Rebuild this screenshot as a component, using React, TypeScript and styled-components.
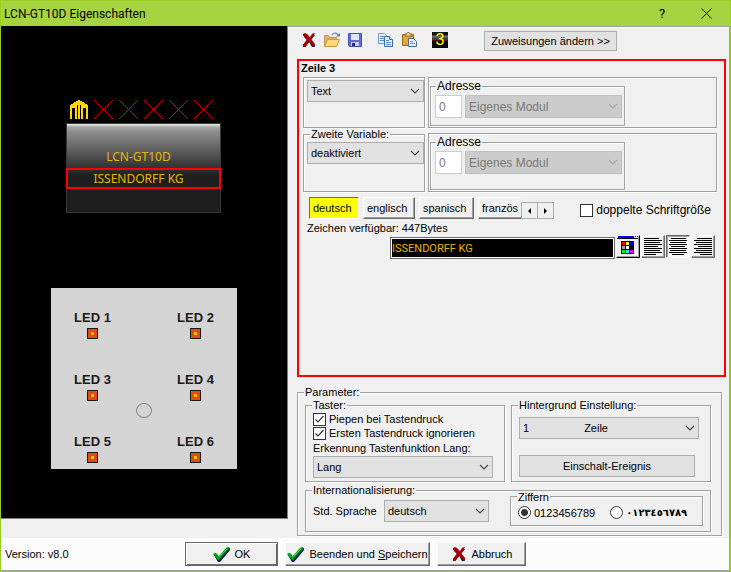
import React from "react";
import styled, { createGlobalStyle, css } from "styled-components";

const GlobalStyle = createGlobalStyle`
  * { box-sizing: border-box; }
  body {
    margin: 0;
    font: 11px/14px "Liberation Sans", Arial, sans-serif;
    color: #000;
    background: #f0f0f0;
  }
  button, input, select { font: inherit; color: inherit; margin: 0; }
`;

const etched = css`
  border: 1px solid #a0a0a0;
  box-shadow: 1px 1px 0 #fff, inset 1px 1px 0 #fff;
`;

const raised = css`
  border: 1px solid;
  border-color: #fff #696969 #696969 #fff;
  box-shadow: inset -1px -1px 0 #a0a0a0;
`;

const Window = styled.div`
  display: flex;
  flex-direction: column;
  min-height: 100vh;
  border: 1px solid #9acd20;
  background: #f0f0f0;
`;

const TitleBar = styled.header`
  display: flex;
  align-items: center;
  height: 25px;
  padding: 0 12px 0 3px;
  background: #a6d340;
  font: 12px/16px Roboto, "Open Sans", sans-serif;
`;

const Title = styled.h1`
  flex: 1;
  margin: 0;
  font: inherit;
`;

const TitleButton = styled.button`
  display: grid;
  place-items: center;
  width: 24px;
  height: 22px;
  padding: 0;
  border: 0;
  background: none;
  font-size: 13px;

  & + & { margin-left: 20px; }
`;

const Body = styled.main`
  display: flex;
  flex: 1;
`;

const Preview = styled.section`
  display: flex;
  flex-direction: column;
  flex: 0 0 287px;
  margin-bottom: 19px;
  background: #000;
  border: solid #808080;
  border-width: 0 1px 1px 0;
`;

const Display = styled.div`
  width: 155px;
  margin: 74px 0 0 65px;
`;

const SymbolRow = styled.div`
  display: flex;
  gap: 6px;
  height: 23px;
  padding-left: 4px;
`;

const Lcd = styled.div`
  height: 90px;
  border: 1px solid #383838;
  background: linear-gradient(#f0f0f0 0, #a8a8a8 3px, #8c8c8c 8px, #1e1e1e 52px, #1e1e1e);
`;

const LcdLine = styled.div<{ $selected?: boolean }>`
  display: flex;
  align-items: ${(p) => (p.$selected ? "center" : "flex-end")};
  justify-content: center;
  height: ${(p) => (p.$selected ? 21 : 44)}px;
  margin: 0 -1px;
  padding: 0 10px ${(p) => (p.$selected ? 0 : 3)}px 0;
  border: ${(p) => (p.$selected ? "2px solid #f00" : "0")};
  color: #e6b800;
  font: 12px/16px "Noto Sans", "Open Sans", sans-serif;
`;

const LedPanel = styled.div`
  position: relative;
  display: grid;
  grid-template-columns: 1fr 1fr;
  grid-auto-rows: 62px;
  width: 186px;
  height: 181px;
  margin: 75px 0 0 50px;
  padding: 22px 0 0;
  background: #d4d4d4;
`;

const Led = styled.div`
  display: flex;
  flex-direction: column;
  align-items: center;
  padding-right: 10px;
  font: bold 13px/16px "Liberation Sans", Arial, sans-serif;
  color: #1c1817;

  &:nth-child(even) { padding: 0 0 0 10px; }
`;

const Lamp = styled.span`
  display: grid;
  place-items: center;
  width: 11px;
  height: 11px;
  margin-top: 2px;
  border: 1px solid #1c1817;
  background: #e14a17;

  &::after { content: ""; width: 3px; height: 3px; background: #ffc400; }
`;

const Sensor = styled.span`
  position: absolute;
  left: 85px;
  top: 115px;
  width: 16px;
  height: 15px;
  border: 1px solid #888;
  border-radius: 50%;
`;

const Settings = styled.section`
  flex: 1;
  min-width: 0;
  padding: 0 3px 2px 9px;
  border: solid #a0a0a0;
  border-width: 1px 1px 0 0;
  box-shadow: inset 0 1px 0 #fff;
`;

const Toolbar = styled.div`
  display: flex;
  align-items: center;
  gap: 7px;
  height: 28px;
  padding-left: 4px;
`;

const ToolButton = styled.button<{ $gap?: number }>`
  display: grid;
  place-items: center;
  width: 16px;
  height: 16px;
  margin-right: ${(p) => p.$gap ?? 0}px;
  margin-bottom: 3px;
  padding: 0;
  border: 0;
  background: none;
`;

const DigitTool = styled(ToolButton)`
  background: linear-gradient(#111 0 3px, #777 4px, #333 7px, #a22 8px, #000 9px);
  color: #ff0;
  font: 16px/16px "Liberation Sans", Arial, sans-serif;
`;

const FlatButton = styled.button`
  border: 1px solid #adadad;
  background: #e1e1e1;
  text-align: center;
  padding: 0;
`;

const AssignButton = styled(FlatButton)`
  width: 133px;
  height: 20px;
`;

const LinePanel = styled.section`
  height: 318px;
  margin-top: 4px;
  padding: 0 7px 0 4px;
  border: 2px solid #f00;
`;

const LineTitle = styled.h2`
  margin: 0 -2px;
  height: 16px;
  font: bold 11px/14px "Liberation Sans", Arial, sans-serif;
`;

const VariableRow = styled.div`
  display: flex;
  gap: 3px;
`;

const Frame = styled.fieldset`
  min-width: 0;
  margin: 0;
  padding: 0 7px;
  ${etched}
`;

const Legend = styled.legend`
  padding: 0 1px;
  margin-left: -1px;
  background: #f0f0f0;
  line-height: 12px;
`;

const VariableLegend = styled(Legend)`
  margin-left: 3px;
`;

const BigLegend = styled(Legend)`
  margin-left: 1px;
  font-size: 12px;
  line-height: 14px;
`;

const VariableFrame = styled(Frame)`
  flex: 0 0 122px;
  padding: 2px 0 0 3px;
`;

const AddressBox = styled.div<{ $offset?: number; $height: number }>`
  display: flex;
  flex: 1;
  height: ${(p) => p.$height}px;
  margin-top: ${(p) => p.$offset ?? 0}px;
  padding: 1px;
  ${etched}
`;

const AddressFrame = styled(Frame)`
  width: 195px;
  padding: 2px 2px 0 4px;
`;

const AddressFields = styled.div`
  display: flex;
  gap: 3px;
  font-size: 12px;
  color: #787878;
`;

const NumberInput = styled.input`
  width: 27px;
  height: 23px;
  padding: 0 3px;
  border: 1px solid #ccc;
  background: #fff;
`;

const SelectShell = styled.span<{ $width?: number; $height?: number }>`
  position: relative;
  display: block;
  width: ${(p) => (p.$width ? `${p.$width}px` : "100%")};
  height: ${(p) => p.$height ?? 22}px;

  svg { position: absolute; right: 4px; top: 7px; pointer-events: none; }
`;

const SelectBox = styled.select`
  appearance: none;
  width: 100%;
  height: 100%;
  padding: 0 18px 0 3px;
  border: 1px solid #adadad;
  border-radius: 0;
  background: #e1e1e1;

  &:disabled { opacity: 1; color: #787878; background: #ccc; border-color: #bfbfbf; }
`;

const TabRow = styled.div`
  display: flex;
  align-items: flex-end;
  height: 27px;
  padding-left: 6px;
`;

const Tabs = styled.div`
  display: flex;
  flex: 0 0 212px;
  gap: 4px;
  overflow: hidden;
`;

const Tab = styled.button<{ $active?: boolean; $width: number }>`
  flex: 0 0 ${(p) => p.$width}px;
  height: 22px;
  padding: 0 0 0 3px;
  text-align: left;
  background: #f0f0f0;
  ${raised}
  ${(p) => p.$active && css`
    background: #ff0;
    border-color: #696969 #fff #fff #696969;
    box-shadow: none;
  `}
`;

const ScrollButton = styled.button`
  display: grid;
  place-items: center;
  width: 17px;
  height: 17px;
  padding: 0;
  border: 1px solid #adadad;
  background: #f0f0f0;

  & + & { margin-left: -1px; }
`;

const Choice = styled.label<{ $large?: boolean }>`
  display: flex;
  align-items: center;
  gap: 3px;
  font-size: ${(p) => (p.$large ? 12 : 11)}px;
  white-space: nowrap;
`;

const DoubleSize = styled.div`
  margin: 0 6px 2px auto;
`;

const CheckInput = styled.input`
  appearance: none;
  flex: none;
  width: 13px;
  height: 13px;
  border: 1px solid #333;
  background: #fff;

  &:checked {
    background: #fff url("data:image/svg+xml,%3Csvg xmlns='http://www.w3.org/2000/svg' width='11' height='11'%3E%3Cpath d='M1.5 5.5 4 8l5.500-6' fill='none' stroke='%23333' stroke-width='1.200'/%3E%3C/svg%3E") center no-repeat;
  }
`;

const RadioInput = styled.input`
  appearance: none;
  flex: none;
  width: 13px;
  height: 13px;
  border: 1px solid #333;
  border-radius: 50%;
  background: #fff;

  &:checked { background: radial-gradient(circle, #333 0 3px, #fff 4px); }
`;

const Capacity = styled.div`
  height: 16px;
  padding: 2px 0 0 4px;
`;

const EditorRow = styled.div`
  display: flex;
  gap: 1px;
  margin: 0 2px 0 87px;
`;

const LineInput = styled.input`
  flex: 1;
  min-width: 0;
  height: 22px;
  margin-top: 2px;
  padding: 0 1px;
  border: 1px solid #696969;
  background: #000;
  color: #e6b800;
  font-family: Roboto, "Liberation Sans", sans-serif;
  box-shadow: inset 0 0 0 1px #fff;
`;

const SquareButton = styled.button<{ $pressed?: boolean }>`
  display: grid;
  place-items: center;
  width: 24px;
  height: 23px;
  padding: 0;
  background: #f0f0f0;
  ${raised}
  ${(p) => p.$pressed && css`
    background: #fafafa;
    border-color: #696969 #fff #fff #696969;
    box-shadow: inset 1px 1px 0 #a0a0a0;
  `}
`;

const PaletteButton = styled(SquareButton)`
  border-color: #fff #000 #000 #fff;
`;

const ParameterFrame = styled(Frame)`
  margin: 9px 4px 0 0;
  padding: 1px 10px 3px 7px;
`;

const ParameterGrid = styled.div`
  display: grid;
  grid-template-columns: 1fr 1fr;
  gap: 2px 6px;
`;

const KeyFrame = styled(Frame)`
  padding: 1px 11px 3px 7px;
`;

const KeyLabel = styled.label`
  display: block;
  line-height: 16px;
`;

const BackgroundFrame = styled(Frame)`
  display: flex;
  flex-direction: column;
  gap: 16px;
  padding: 6px 11px 0 7px;
`;

const EventButton = styled(FlatButton)`
  height: 22px;
  margin-right: 4px;
`;

const LanguageFrame = styled(Frame)`
  grid-column: 1 / -1;
`;

const LanguageRow = styled.div`
  display: flex;
  align-items: center;
  gap: 6px;
  height: 35px;
  padding-bottom: 5px;
`;

const LanguageLabel = styled.label`
  flex: 0 0 65px;
`;

const DigitFrame = styled(Frame)`
  width: 193px;
  height: 35px;
  margin: -6px 0 0 auto;
`;

const DigitOptions = styled.div`
  display: flex;
  gap: 15px;
  padding-top: 3px;
`;

const ArabicDigits = styled.span`
  font: bold 10px/13px "DejaVu Sans", sans-serif;
`;

const Footer = styled.footer`
  display: flex;
  align-items: center;
  gap: 7px;
  height: 33px;
  padding: 0 4px 1px;
  background: #fcfcfc;
  border: solid #a0a0a0;
  border-width: 0 1px 1px 0;
`;

const Version = styled.span`
  flex: 0 0 173px;
`;

const DialogButton = styled.button<{ $width: number; $default?: boolean }>`
  display: flex;
  align-items: center;
  justify-content: center;
  gap: 5px;
  width: ${(p) => p.$width}px;
  height: 24px;
  padding: 0;
  background: #f0f0f0;
  white-space: nowrap;
  ${raised}
  ${(p) => p.$default && css`
    border-color: #696969;
    box-shadow: inset 1px 1px 0 #fff, inset -1px -1px 0 #696969;
  `}
`;

const Chevron = ({ muted }: { muted?: boolean }) => (
  <svg width="10" height="8" viewBox="0 0 10 8" aria-hidden="true">
    <path d="M1 2l4 4 4-4" fill="none" stroke={muted ? "#a0a0a0" : "#444"} strokeWidth="1.1" />
  </svg>
);

type SelectProps = {
  id?: string;
  label?: string;
  options: string[];
  width?: number;
  height?: number;
  disabled?: boolean;
};

const Select = ({ id, label, options, width, height, disabled }: SelectProps) => (
  <SelectShell $width={width} $height={height}>
    <SelectBox id={id} aria-label={label} disabled={disabled}>
      {options.map((o) => <option key={o}>{o}</option>)}
    </SelectBox>
    <Chevron muted={disabled} />
  </SelectShell>
);

const Address = () => (
  <AddressFrame disabled>
    <BigLegend>Adresse</BigLegend>
    <AddressFields>
      <NumberInput aria-label="Adresse" defaultValue="0" disabled />
      <Select label="Modul" options={["Eigenes Modul"]} width={157} height={23} disabled />
    </AddressFields>
  </AddressFrame>
);

const DeleteIcon = () => (
  <svg width="16" height="16" viewBox="0 0 16 16" aria-hidden="true">
    <path d="M3 3l2-1 2 1 2 3 3-4 2 1-4 5 3 4 1 3-3 0-3-5-4 5-2 0 0-2 4-5-3-3z" fill="#111c4a" />
    <path d="M2 2l2-1 2 1 2.500 3.500 3-4L14 1l-4 6 4 5v2h-2l-3.500-4.500L4.500 15H2v-2l4-5.500-4-4z" fill="#a80000" />
  </svg>
);

const CheckIcon = () => (
  <svg width="17" height="16" viewBox="0 0 17 16" aria-hidden="true">
    <path d="M1 9l2-1 3 3 9-9h2v2l-4 5-6 7H5z" fill="#001a4d" />
    <path d="M0 8l2-1h1l3 3 7-8 2-1h1v2l-4 4-6 7H5z" fill="#00a316" />
    <path d="M5 11l3-2 6-6" fill="none" stroke="#3bd64d" />
  </svg>
);

const OpenIcon = () => (
  <svg width="16" height="16" viewBox="0 0 16 16" aria-hidden="true">
    <path d="M.5 14V3.500h4l1 2h7V8" fill="#e0b458" stroke="#c09a50" />
    <path d="M.5 14.500L3.500 7.500h12l-3 7z" fill="#ffd978" stroke="#c99a3e" />
    <path d="M8 3c1-2 4-3 6 0" fill="none" stroke="#7e93ad" strokeWidth="1.500" />
    <path d="M12 4.500h4V1z" fill="#607fa8" />
  </svg>
);

const SaveIcon = () => (
  <svg width="14" height="14" viewBox="0 0 14 14" aria-hidden="true">
    <path d="M.5.5h13v13h-12l-1-1z" fill="#5f6cd8" stroke="#4450b4" />
    <path d="M3 1h8v6H3z" fill="#dfe6ff" />
    <path d="M3 9h8v4H3z" fill="#c8cce0" />
    <path d="M4 10h3v3H4z" fill="#252e78" />
  </svg>
);

const CopyIcon = () => (
  <svg width="16" height="16" viewBox="0 0 16 16" aria-hidden="true">
    <path d="M.5 1.500h6l3 3v7h-9z" fill="#e6f1ff" stroke="#6f97cf" />
    <path d="M2 4.500h4M2 6.500h4M2 8.500h4" stroke="#5c88c6" />
    <path d="M6.500 4.500h5l3 3v7h-8z" fill="#e6f1ff" stroke="#386cac" />
    <path d="M11.500 4.500v3h3" fill="#fff" stroke="#386cac" />
    <path d="M8 8.500h3M8 10.500h5M8 12.500h5" stroke="#5c88c6" />
  </svg>
);

const PasteIcon = () => (
  <svg width="17" height="16" viewBox="0 0 17 16" aria-hidden="true">
    <path d="M1.500 2.500h11v11h-11z" fill="#e4a73b" stroke="#9b671c" />
    <path d="M4 4V2h2c0-2 3-2 3 0h2v2z" fill="#ffe69a" stroke="#83642b" />
    <path d="M7.500 6.500h5l3 3v5h-8z" fill="#e6eef9" stroke="#506b91" />
    <path d="M9 9.500h3M9 11.500h5" stroke="#7c95b8" />
  </svg>
);

const HouseSymbol = () => (
  <svg width="18" height="20" viewBox="0 0 18 20" shapeRendering="crispEdges" aria-hidden="true">
    <path d="M0 19V5l2-1 3-2 2-1 2-1 2 1 2 1 3 2 2 1v14h-2V8h-3v11h-2V5h-1v14H8V5H7v14H5V8H2v11z" fill="#ffd600" />
  </svg>
);

const EmptySymbol = () => (
  <svg width="19" height="19" viewBox="0 0 19 19" aria-hidden="true">
    <path d="M0 0l19 19M19 0L0 19" stroke="#f00" strokeWidth="0.8" />
  </svg>
);

const paletteColors = ["#f00", "#ff0", "#00f", "#a0a0a0", "#fff", "#000", "#0f0", "#0ff", "#f0f"];

const PaletteIcon = () => (
  <svg width="22" height="21" viewBox="0 0 22 21" shapeRendering="crispEdges" aria-hidden="true">
    <path d="M1 0h16v2H1z" fill="#00f" />
    <path d="M0 2h21v1H0zM18 0h1v1h-1zM20 0h1v1h-1z" fill="#000" />
    <path d="M4 5h13v13H4z" fill="#000" />
    {paletteColors.map((c, i) => (
      <rect key={c} x={5 + (i % 3) * 4} y={6 + Math.floor(i / 3) * 4} width="3" height="3" fill={c} />
    ))}
  </svg>
);

const alignWidths = [15, 18, 16, 18, 14, 18, 16, 18, 12];

const AlignIcon = ({ align }: { align: number }) => (
  <svg width="18" height="17" viewBox="0 0 18 17" shapeRendering="crispEdges" aria-hidden="true">
    {alignWidths.map((w, i) => (
      <rect key={i} x={Math.round((18 - w) * align)} y={i * 2} width={w} height="1" />
    ))}
  </svg>
);

const Arrow = ({ right }: { right?: boolean }) => (
  <svg width="5" height="6" viewBox="0 0 5 6" aria-hidden="true">
    <path d={right ? "M1 0l3 3-3 3z" : "M4 0L1 3l3 3z"} />
  </svg>
);

export default function App() {
  return (
    <>
      <GlobalStyle />
      <Window>
        <TitleBar>
          <Title>LCN-GT10D Eigenschaften</Title>
          <TitleButton aria-label="Hilfe">?</TitleButton>
          <TitleButton aria-label="Schließen">
            <svg width="11" height="11" viewBox="0 0 11 11" aria-hidden="true">
              <path d="M.5.5l10 10M10.500.5l-10 10" stroke="#111" />
            </svg>
          </TitleButton>
        </TitleBar>

        <Body>
          <Preview>
            <Display>
              <SymbolRow>
                <HouseSymbol />
                {[0, 1, 2, 3, 4].map((i) => <EmptySymbol key={i} />)}
              </SymbolRow>
              <Lcd>
                <LcdLine>LCN-GT10D</LcdLine>
                <LcdLine $selected>ISSENDORFF KG</LcdLine>
              </Lcd>
            </Display>
            <LedPanel>
              {[1, 2, 3, 4, 5, 6].map((n) => (
                <Led key={n}>LED {n}<Lamp /></Led>
              ))}
              <Sensor />
            </LedPanel>
          </Preview>

          <Settings>
            <Toolbar>
              <ToolButton aria-label="Löschen"><DeleteIcon /></ToolButton>
              <ToolButton aria-label="Öffnen"><OpenIcon /></ToolButton>
              <ToolButton aria-label="Speichern" $gap={8}><SaveIcon /></ToolButton>
              <ToolButton aria-label="Kopieren"><CopyIcon /></ToolButton>
              <ToolButton aria-label="Einfügen" $gap={8}><PasteIcon /></ToolButton>
              <DigitTool aria-label="Zeile 3" $gap={29}>3</DigitTool>
              <AssignButton>Zuweisungen ändern &gt;&gt;</AssignButton>
            </Toolbar>

            <LinePanel>
              <LineTitle>Zeile 3</LineTitle>
              <VariableRow>
                <VariableFrame>
                  <Select label="Variable" options={["Text"]} width={117} />
                </VariableFrame>
                <AddressBox $height={51}><Address /></AddressBox>
              </VariableRow>
              <VariableRow>
                <VariableFrame>
                  <VariableLegend>Zweite Variable:</VariableLegend>
                  <Select label="Zweite Variable" options={["deaktiviert"]} width={117} />
                </VariableFrame>
                <AddressBox $height={59} $offset={5}><Address /></AddressBox>
              </VariableRow>

              <TabRow>
                <Tabs>
                  <Tab $width={50} $active>deutsch</Tab>
                  <Tab $width={52}>englisch</Tab>
                  <Tab $width={55}>spanisch</Tab>
                  <Tab $width={60}>französ</Tab>
                </Tabs>
                <ScrollButton aria-label="Zurück"><Arrow /></ScrollButton>
                <ScrollButton aria-label="Weiter"><Arrow right /></ScrollButton>
                <DoubleSize>
                  <Choice $large><CheckInput type="checkbox" />doppelte Schriftgröße</Choice>
                </DoubleSize>
              </TabRow>

              <Capacity>Zeichen verfügbar: 447Bytes</Capacity>
              <EditorRow>
                <LineInput aria-label="Zeilentext" defaultValue="ISSENDORFF KG" />
                <PaletteButton aria-label="Farbe"><PaletteIcon /></PaletteButton>
                <SquareButton aria-label="Linksbündig"><AlignIcon align={0} /></SquareButton>
                <SquareButton aria-label="Zentriert" $pressed><AlignIcon align={0.5} /></SquareButton>
                <SquareButton aria-label="Rechtsbündig"><AlignIcon align={1} /></SquareButton>
              </EditorRow>
            </LinePanel>

            <ParameterFrame>
              <Legend>Parameter:</Legend>
              <ParameterGrid>
                <KeyFrame>
                  <Legend>Taster:</Legend>
                  <Choice><CheckInput type="checkbox" defaultChecked />Piepen bei Tastendruck</Choice>
                  <Choice><CheckInput type="checkbox" defaultChecked />Ersten Tastendruck ignorieren</Choice>
                  <KeyLabel htmlFor="long-press">Erkennung Tastenfunktion Lang:</KeyLabel>
                  <Select id="long-press" options={["Lang"]} />
                </KeyFrame>
                <BackgroundFrame>
                  <Legend>Hintergrund Einstellung:</Legend>
                  <Select label="Hintergrund" options={["1" + "\u00a0".repeat(18) + "Zeile"]} />
                  <EventButton>Einschalt-Ereignis</EventButton>
                </BackgroundFrame>
                <LanguageFrame>
                  <Legend>Internationalisierung:</Legend>
                  <LanguageRow>
                    <LanguageLabel htmlFor="language">Std. Sprache</LanguageLabel>
                    <Select id="language" options={["deutsch"]} width={105} />
                    <DigitFrame>
                      <Legend>Ziffern</Legend>
                      <DigitOptions>
                        <Choice><RadioInput type="radio" name="digits" defaultChecked />0123456789</Choice>
                        <Choice>
                          <RadioInput type="radio" name="digits" />
                          <ArabicDigits>٠١٢٣٤٥٦٧٨٩</ArabicDigits>
                        </Choice>
                      </DigitOptions>
                    </DigitFrame>
                  </LanguageRow>
                </LanguageFrame>
              </ParameterGrid>
            </ParameterFrame>
          </Settings>
        </Body>

        <Footer>
          <Version>Version: v8.0</Version>
          <DialogButton $width={93} $default><CheckIcon />OK</DialogButton>
          <DialogButton $width={145}><CheckIcon /><span>Beenden und <u>S</u>peichern</span></DialogButton>
          <DialogButton $width={89}><DeleteIcon />Abbruch</DialogButton>
        </Footer>
      </Window>
    </>
  );
}
